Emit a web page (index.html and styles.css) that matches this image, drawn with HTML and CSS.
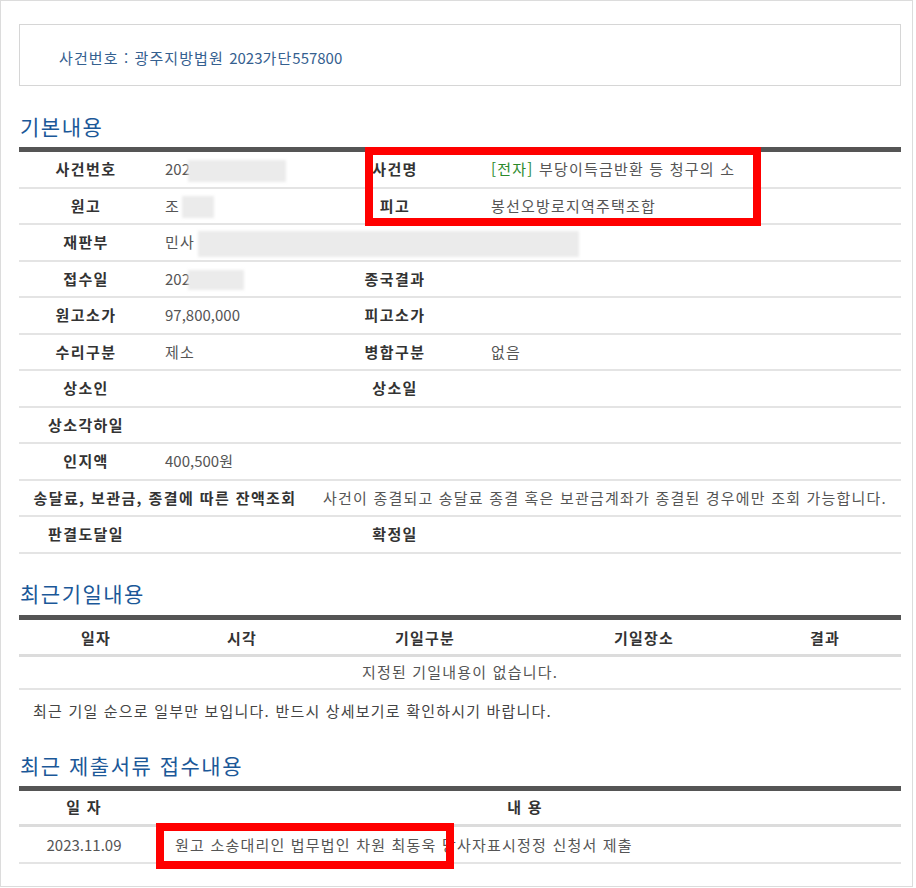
FILE: index.html
```
<!DOCTYPE html>
<html lang="ko">
<head>
	<meta charset="UTF-8">
	<title>사건일반내용</title>
	<link rel="stylesheet" href="styles.css">
</head>
<body>
	<div id="frame">
		<div class="case-box">사건번호 : 광주지방법원 <span class="num">2023</span>가단<span class="num">557800</span></div>

		<h2 class="sub-title">기본내용</h2>
		<table class="info">
			<colgroup>
				<col class="c-lbl1">
				<col class="c-val1">
				<col class="c-lbl2">
				<col class="c-val2">
			</colgroup>
			<tr>
				<th>사건번호</th>
				<td><span class="num">202</span><span class="mask m-no"></span></td>
				<th>사건명</th>
				<td><span class="green">[전자]</span> 부당이득금반환 등 청구의 소</td>
			</tr>
			<tr>
				<th>원고</th>
				<td>조<span class="mask m-name"></span></td>
				<th>피고</th>
				<td>봉선오방로지역주택조합</td>
			</tr>
			<tr>
				<th>재판부</th>
				<td colspan="3">민사<span class="mask m-court"></span></td>
			</tr>
			<tr>
				<th>접수일</th>
				<td><span class="num">202</span><span class="mask m-date"></span></td>
				<th>종국결과</th>
				<td></td>
			</tr>
			<tr>
				<th>원고소가</th>
				<td><span class="num">97,800,000</span></td>
				<th>피고소가</th>
				<td></td>
			</tr>
			<tr>
				<th>수리구분</th>
				<td>제소</td>
				<th>병합구분</th>
				<td>없음</td>
			</tr>
			<tr>
				<th>상소인</th>
				<td></td>
				<th>상소일</th>
				<td></td>
			</tr>
			<tr>
				<th>상소각하일</th>
				<td colspan="3"></td>
			</tr>
			<tr>
				<th>인지액</th>
				<td colspan="3"><span class="num">400,500</span>원</td>
			</tr>
			<tr>
				<th colspan="2">송달료, 보관금, 종결에 따른 잔액조회</th>
				<td colspan="2">사건이 종결되고 송달료 종결 혹은 보관금계좌가 종결된 경우에만 조회 가능합니다.</td>
			</tr>
			<tr>
				<th>판결도달일</th>
				<td></td>
				<th>확정일</th>
				<td></td>
			</tr>
		</table>

		<h2 class="sub-title t2">최근기일내용</h2>
		<table class="list">
			<colgroup>
				<col style="width:154px">
				<col style="width:138px">
				<col style="width:228px">
				<col style="width:210px">
				<col style="width:152px">
			</colgroup>
			<tr>
				<th>일자</th>
				<th>시각</th>
				<th>기일구분</th>
				<th>기일장소</th>
				<th>결과</th>
			</tr>
			<tr>
				<td colspan="5" class="empty">지정된 기일내용이 없습니다.</td>
			</tr>
		</table>
		<p class="note">최근 기일 순으로 일부만 보입니다. 반드시 상세보기로 확인하시기 바랍니다.</p>

		<h2 class="sub-title t3">최근 제출서류 접수내용</h2>
		<table class="list docs">
			<colgroup>
				<col style="width:130px">
				<col style="width:752px">
			</colgroup>
			<tr>
				<th>일 자</th>
				<th>내 용</th>
			</tr>
			<tr>
				<td class="center"><span class="num">2023.11.09</span></td>
				<td class="left">원고 소송대리인 법무법인 차원 최동욱 당사자표시정정 신청서 제출</td>
			</tr>
		</table>

		<div class="mark mark-1"></div>
		<div class="mark mark-2"></div>
	</div>
</body>
</html>
```

FILE: styles.css
```
* {
	margin: 0;
	padding: 0;
	box-sizing: border-box;
}
body {
	font-family: "Noto Sans CJK KR", "Noto Sans", sans-serif;
	font-size: 15px;
	color: #555;
	background: #fff;
}
#frame {
	position: relative;
	width: 913px;
	height: 887px;
	border: 1px solid #dcdcdc;
	padding: 23px 11px 0 18px;
}
.num {
	letter-spacing: 0;
}
.case-box {
	height: 62px;
	border: 1px solid #d6d6d6;
	padding: 22px 0 0 39px;
	line-height: 22px;
	color: #35608f;
	letter-spacing: 1.1px;
}
.sub-title {
	margin: 26px 0 7px 1px;
	font-size: 21px;
	font-weight: normal;
	line-height: 28px;
	color: #1b5898;
	letter-spacing: 1.5px;
}
.sub-title.t2 {
	margin-top: 25px;
	margin-bottom: 8px;
}
.sub-title.t3 {
	margin-top: 30px;
}
table {
	width: 882px;
	table-layout: fixed;
	border-collapse: separate;
	border-spacing: 0;
	border-top: 5px solid #555;
}
.info th,
.info td {
	padding: 7px 12px;
	line-height: 20.5px;
	border-bottom: 2px solid #e4e4e4;
	white-space: nowrap;
	vertical-align: middle;
}
.info th {
	color: #333;
	font-weight: bold;
	text-align: center;
	letter-spacing: 1.4px;
}
.info td {
	text-align: left;
	letter-spacing: 1.2px;
}
.c-lbl1 { width: 134px; }
.c-val1 { width: 158px; }
.c-lbl2 { width: 168px; }
.c-val2 { width: 422px; }
.green {
	color: #2b8a2b;
}
.mask {
	display: inline-block;
	vertical-align: middle;
	background: #ebebeb;
	filter: blur(1.5px);
}
.m-no { width: 98px; height: 22px; margin: -3px 0 -3px -2px; }
.m-name { width: 32px; height: 22px; margin: -3px 0 -3px 2px; }
.m-court { width: 381px; height: 26px; margin: -5px 0 -5px 3px; }
.m-date { width: 56px; height: 20px; margin: -2px 0 -2px -2px; }
.list th {
	padding: 8px 0 6px;
	line-height: 20px;
	color: #333;
	font-weight: bold;
	text-align: center;
	letter-spacing: 1.2px;
	border-bottom: 3px solid #dcdcdc;
}
.list td {
	padding: 5px 0 6px;
	line-height: 20px;
	letter-spacing: 1.2px;
	border-bottom: 2px solid #e4e4e4;
}
.list .empty {
	text-align: center;
}
.docs th {
	padding: 6px 0 7px;
}
.docs td {
	padding: 8px 0 7px;
}
.docs .center {
	text-align: center;
}
.docs .left {
	padding-left: 26px;
}
.note {
	margin: 11px 0 0 14px;
	line-height: 20px;
	color: #444;
	letter-spacing: 1.2px;
}
.mark {
	position: absolute;
	border: 8px solid #ff0000;
}
.mark-1 {
	left: 364px;
	top: 146px;
	width: 396px;
	height: 79px;
}
.mark-2 {
	left: 155px;
	top: 822px;
	width: 298px;
	height: 46px;
}
```
